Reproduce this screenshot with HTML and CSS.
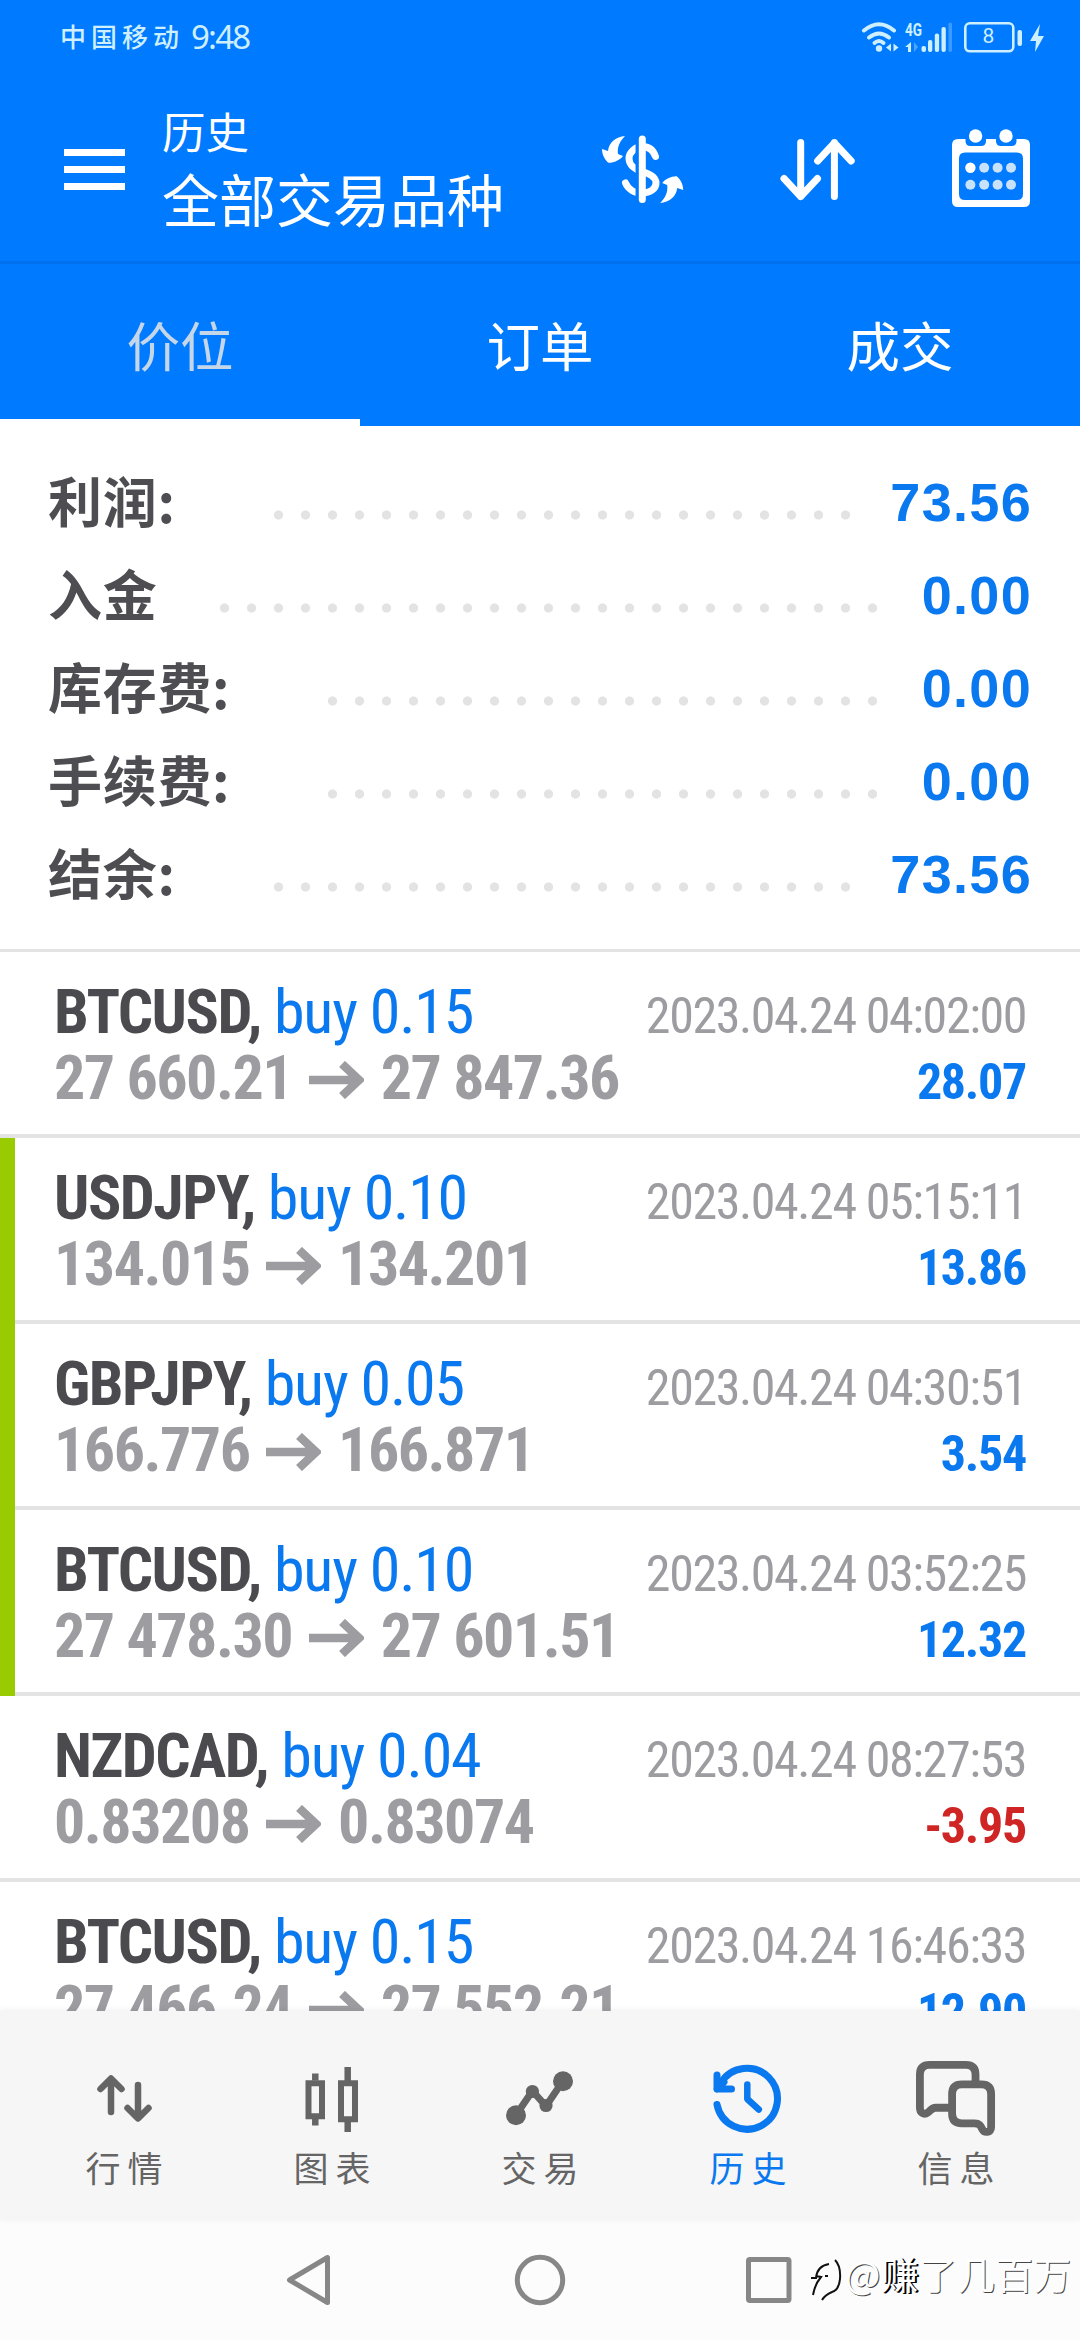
FILE: index.html
```html
<!DOCTYPE html>
<html lang="zh"><head><meta charset="utf-8"><title>历史</title><link rel="stylesheet" href="styles.css"></head>
<body>
<header class="top">
  <div class="status">
    <span class="carrier">中国移动</span><span class="clock">9:48</span>
    <svg class="status-icons" width="186" height="36" viewBox="860 19 186 36" fill="none">
      <g stroke="#cdefff" stroke-width="4" stroke-linecap="round"><path d="M864 30.5Q879 18 894 30.5"/><path d="M869 37.5Q879 29.500 889 37.500"/><path d="M874.500 43Q879 39 883.500 43"/></g>
      <g fill="#cdefff"><circle cx="879" cy="48.500" r="3.200"/><path d="M891 43.500v8l-5-4zM893.500 43.500v8l5-4z"/><path d="M911 42v10h-3v-5h-3z"/>
      <rect x="921.500" y="46" width="4.500" height="6" rx="2"/><rect x="928" y="40" width="4.300" height="12" rx="2"/><rect x="934.800" y="33.500" width="4.300" height="18.500" rx="2"/><rect x="941.500" y="27" width="4.300" height="25" rx="2"/><rect x="1017.500" y="30" width="4.500" height="16" rx="2"/><path d="M1040 24l-10 17h6l-1 11 9-16h-6z"/></g>
      <path d="M914 42v10l4-5z" fill="#4aa5ff"/><rect x="948.500" y="22.500" width="3.500" height="29.500" rx="1.700" fill="#3b9bff"/>
      <rect x="965.300" y="23.300" width="48" height="28" rx="4.500" stroke="#cdefff" stroke-width="2.600"/>
      <text x="905" y="36" class="net" textLength="17" lengthAdjust="spacingAndGlyphs">4G</text><text x="988.500" y="43" class="batt" text-anchor="middle">8</text>
    </svg>
  </div>
  <div class="appbar">
    <svg class="menu" width="61" height="41" viewBox="0 0 61 41" fill="#fff"><path d="M0 0h61v7H0zM0 17h61v7H0zM0 34h61v7H0z"/></svg>
    <div class="titles"><div class="subtitle">历史</div><div class="title">全部交易品种</div></div>
    <svg class="actions" width="430" height="80" viewBox="600 128 430 80" fill="none" stroke-linecap="round" stroke-linejoin="round">
      <path d="M655.500 156.500C653 149 648 146.500 642 146.500S629 152 629 158.500 635 169.500 642 171.500 656 177 656 183 650 193 642 193 628 189 625.500 183" stroke="#fff" stroke-width="7"/>
      <path d="M637.300 138v64" stroke="#007aff" stroke-width="3.500"/><path d="M642.300 139v60.500" stroke="#fff" stroke-width="7"/>
      <path id="swing" fill="#fff" d="M625 136C616 137 609 142 608 151L602 149C602 155 605 160 608.500 162.800 614 163 620 160 623 156L618 154C617 147 620 141 625 136Z"/>
      <use href="#swing" transform="rotate(180 642.600 169.500)"/>
      <g stroke="#fff" stroke-width="7"><path d="M800.700 142.500v54M784 178.500l16.700 18 16.800-18M834.400 196.500v-54M817.600 161l16.800-18 16.800 18"/></g>
      <path fill="#fff" fill-rule="evenodd" d="M958 139h7.500v2q0 5 5 5h10.500q5 0 5-5v-2h10v2q0 5 5 5h10.500q5 0 5-5v-2h7.500q6 0 6 6v56q0 6-6 6h-66q-6 0-6-6v-56q0-6 6-6zM965 152.500q-6 0-6 6v35.500q0 6 6 6h52q6 0 6-6v-35.500q0-6-6-6z"/>
      <g fill="#fff"><circle cx="975.600" cy="136" r="6.700"/><circle cx="1006" cy="136" r="6.700"/><circle cx="970.400" cy="167.700" r="5.200"/></g>
      <g fill="#c9e2fb"><circle cx="984.200" cy="167.700" r="5"/><circle cx="997.600" cy="167.700" r="5"/><circle cx="1011" cy="167.700" r="5"/><circle cx="970.400" cy="184.700" r="5"/><circle cx="984.200" cy="184.700" r="5"/><circle cx="997.600" cy="184.700" r="5"/><circle cx="1011" cy="184.700" r="5"/></g>
    </svg>
  </div>
  <nav class="tabs"><div class="tab active">价位</div><div class="tab">订单</div><div class="tab">成交</div></nav>
</header>
<section class="summary">
  <div class="sum"><span>利润:</span><i class="leader" style="width:594px"></i><b class="wide">73.56</b></div>
  <div class="sum"><span>入金</span><i class="leader" style="width:675px"></i><b>0.00</b></div>
  <div class="sum"><span>库存费:</span><i class="leader" style="width:567px"></i><b>0.00</b></div>
  <div class="sum"><span>手续费:</span><i class="leader" style="width:567px"></i><b>0.00</b></div>
  <div class="sum"><span>结余:</span><i class="leader" style="width:594px"></i><b class="wide">73.56</b></div>
</section>
<main class="deals">
  <article class="deal"><div class="line"><div class="name"><b>BTCUSD,</b> buy 0.15</div><time>2023.04.24 04:02:00</time></div><div class="line"><div class="price">27 660.21 <svg class="arrow" viewBox="0 0 55 38"><path d="M0 19h49M33 3l17 16-17 16"/></svg> 27 847.36</div><div class="profit">28.07</div></div></article>
  <article class="deal marked"><div class="line"><div class="name"><b>USDJPY,</b> buy 0.10</div><time>2023.04.24 05:15:11</time></div><div class="line"><div class="price">134.015 <svg class="arrow" viewBox="0 0 55 38"><path d="M0 19h49M33 3l17 16-17 16"/></svg> 134.201</div><div class="profit">13.86</div></div></article>
  <article class="deal marked"><div class="line"><div class="name"><b>GBPJPY,</b> buy 0.05</div><time>2023.04.24 04:30:51</time></div><div class="line"><div class="price">166.776 <svg class="arrow" viewBox="0 0 55 38"><path d="M0 19h49M33 3l17 16-17 16"/></svg> 166.871</div><div class="profit">3.54</div></div></article>
  <article class="deal marked"><div class="line"><div class="name"><b>BTCUSD,</b> buy 0.10</div><time>2023.04.24 03:52:25</time></div><div class="line"><div class="price">27 478.30 <svg class="arrow" viewBox="0 0 55 38"><path d="M0 19h49M33 3l17 16-17 16"/></svg> 27 601.51</div><div class="profit">12.32</div></div></article>
  <article class="deal"><div class="line"><div class="name"><b>NZDCAD,</b> buy 0.04</div><time>2023.04.24 08:27:53</time></div><div class="line"><div class="price">0.83208 <svg class="arrow" viewBox="0 0 55 38"><path d="M0 19h49M33 3l17 16-17 16"/></svg> 0.83074</div><div class="profit loss">-3.95</div></div></article>
  <article class="deal"><div class="line"><div class="name"><b>BTCUSD,</b> buy 0.15</div><time>2023.04.24 16:46:33</time></div><div class="line"><div class="price">27 466.24 <svg class="arrow" viewBox="0 0 55 38"><path d="M0 19h49M33 3l17 16-17 16"/></svg> 27 552.21</div><div class="profit">12.90</div></div></article>
</main>
<nav class="bottom">
  <div class="item"><svg viewBox="83 2050 80 95" class="ico" fill="none" stroke="currentColor" stroke-width="6.500" stroke-linecap="round" stroke-linejoin="round"><path d="M110 2112v-33M99.500 2089l10.500-10.500 10.500 10.500M137 2085v33M126.500 2108l10.500 10.500 10.500-10.500"/></svg><span>行情</span></div>
  <div class="item"><svg viewBox="292 2050 80 95" class="ico" fill="none" stroke="currentColor" stroke-width="6.500"><path d="M315.300 2073.500v7M315.300 2119v6.500M347.700 2067v14M347.700 2121v11"/><path d="M308.500 2083.200h13.500v33h-13.500zM341 2083.200h14v36h-14z" stroke-width="6"/></svg><span>图表</span></div>
  <div class="item"><svg viewBox="500 2050 80 95" class="ico" fill="currentColor"><path d="M516 2115l16.400-24 13.600 15 17-25" fill="none" stroke="currentColor" stroke-width="7"/><circle cx="516" cy="2115.300" r="10"/><circle cx="532.400" cy="2091.500" r="6.600"/><circle cx="546" cy="2105.500" r="6.600"/><circle cx="563" cy="2081.300" r="10"/></svg><span>交易</span></div>
  <div class="item on"><svg viewBox="708 2050 80 95" class="ico" fill="none" stroke="currentColor" stroke-width="7" stroke-linecap="round" stroke-linejoin="round"><path d="M717 2104.500A30.500 30.500 0 1 0 720.500 2083.500"/><path d="M717 2075v14h14.500M717 2089l7-7" /><path d="M747.300 2084.500v14.500l11.500 10.500" stroke-width="6.500"/></svg><span>历史</span></div>
  <div class="item"><svg viewBox="915 2050 82 95" class="ico" fill="none" stroke="currentColor" stroke-width="8" stroke-linecap="round" stroke-linejoin="round"><path d="M976 2082v-8q0-10-10-10h-37q-10 0-10 10v34c0 5 4 8 8 5 3-2 4-5 8-5h15"/><path d="M962 2084h20q10 0 10 10v34c0 6-7 6-9 2s-3-6-8-6h-13q-10 0-10-10v-20q0-10 10-10z"/></svg><span>信息</span></div>
</nav>
<footer class="system">
  <svg width="540" height="70" viewBox="270 2245 540 70" fill="none" stroke="#878787" stroke-width="5" stroke-linejoin="round"><path d="M289.500 2280l38-22.500v45z"/><circle cx="540" cy="2280" r="22.700"/><rect x="748.500" y="2259.500" width="40.500" height="41" rx="1.500"/></svg>
  <div class="watermark"><svg width="35" height="46" viewBox="0 0 35 46" fill="none" stroke="#111" stroke-width="2"><path d="M1 20h5q1-12 13-14M6 18l5 1q-6 7-8 18M25 2q6 6 5 19-1 11-8 13-7 3-10 8M15 18h3"/></svg>@<span class="dark">赚</span>了几百万</div>
</footer>
</body></html>
```
FILE: styles.css
```css
* { box-sizing: border-box; }
body { margin: 0; width: 1080px; height: 2340px; overflow: hidden; display: flex; flex-direction: column; background: #fff; font-family: Roboto, "Noto Sans CJK SC", sans-serif; }
svg { display: block; flex: none; }
.top { height: 426px; background: #007aff; color: #fff; flex: none; }
.status { height: 72px; padding: 19px 34px 0 60px; display: flex; align-items: flex-start; color: #cdefff; line-height: 36px; }
.carrier { font-family: "Noto Sans CJK SC", sans-serif; font-size: 26px; font-weight: 500; letter-spacing: 5px; line-height: 34px; }
.clock { font-size: 33px; margin-left: 7px; font-family: "Noto Sans", sans-serif; letter-spacing: -1.8px; }
.status-icons { margin-left: auto; }
.net { font: 700 19px Roboto, sans-serif; fill: #cdefff; }
.batt { font: 400 21px Roboto, sans-serif; fill: #cdefff; }
.appbar { height: 192px; border-bottom: 3px solid #0070ee; padding: 0 50px 0 64px; display: flex; }
.menu { margin-top: 77px; }
.titles { margin-left: 37px; padding-top: 31px; font-family: "Noto Sans CJK SC", sans-serif; white-space: nowrap; }
.subtitle { font-size: 43.500px; line-height: 56px; }
.title { font-size: 57px; line-height: 76px; }
.actions { margin: 56px 0 0 auto; }
.tabs { height: 162px; display: grid; grid-template-columns: repeat(3, 1fr); font: 53.500px/162px "Noto Sans CJK SC", sans-serif; text-align: center; }
.tab { line-height: 160px; height: 162px; }
.tab.active { color: #c4d6e8; border-bottom: 7px solid #fff; }
.summary { height: 526px; flex: none; padding: 31px 48px 0 48px; border-bottom: 3px solid #e3e3e3; }
.sum { height: 93px; display: flex; align-items: center; font: 700 54px/93px "Noto Sans CJK SC", sans-serif; color: #4d4d52; }
.sum span { line-height: 85px; height: 93px; letter-spacing: .7px; }
.leader { height: 10px; margin: 22px 0 0 auto; background: radial-gradient(circle 5px at 13.500px 5px, #e3e3e3 4.200px, transparent 5px) 0 0 / 27px 10px repeat-x; }
.sum b { width: 146px; text-align: right; color: #0a78ee; font-family: "Liberation Sans", sans-serif; letter-spacing: 1.3px; line-height: 91px; height: 93px; }
.sum .wide { width: 173px; }
.deals { height: 1059px; flex: none; overflow: hidden; font-family: "Roboto Condensed", Roboto, sans-serif; font-stretch: condensed; }
.deal { height: 186px; padding: 27px 54px 0 54px; border-bottom: 4px solid #e3e3e3; }
.marked { border-left: 15px solid #9c0; padding-left: 39px; border-bottom: 0; box-shadow: inset 0 -4px #e3e3e3; }
.line { height: 66px; display: flex; justify-content: space-between; align-items: baseline; line-height: 66px; font-size: 62px; white-space: nowrap; }
.name { color: #0a78ee; letter-spacing: -1.2px; }
.name b { color: #4a4a4f; letter-spacing: -1.5px; }
.price { color: #9d9da1; font-weight: 700; letter-spacing: -1.5px; }
.arrow { display: inline-block; width: 55px; height: 38px; margin: 0 4px; fill: none; stroke: #9d9da1; stroke-width: 8.500; }
time { font-size: 50px; color: #9d9da1; letter-spacing: -1.4px; }
.profit { font-size: 50px; font-weight: 700; color: #0a78ee; letter-spacing: -1.3px; }
.loss { color: #d02525; }
.bottom { height: 209px; flex: none; background: #f6f6f6; box-shadow: 0 -1px 6px rgba(0,0,0,.07); padding: 39px 20px 0; display: grid; grid-template-columns: repeat(5, 1fr); color: #656565; position: relative; }
.item { display: flex; flex-direction: column; align-items: center; font: 35px/50px "Noto Sans CJK SC", sans-serif; }
.item span { letter-spacing: 7px; margin: -3px -7px 0 0; }
.ico { width: 80px; height: 95px; }
.on { color: #0a78ee; }
.system { height: 120px; background: #fcfcfc; padding: 25px 0 0 270px; display: flex; }
.watermark { display: flex; font: 37.500px/56px "Noto Sans CJK SC", sans-serif; letter-spacing: .6px; color: #fff; text-shadow: 1px 1px 0 #444; white-space: nowrap; }
.watermark svg { margin-top: 13px; }
.dark { text-shadow: 1px 1px 0 #000, 2px 1px 0 #000; }
```
